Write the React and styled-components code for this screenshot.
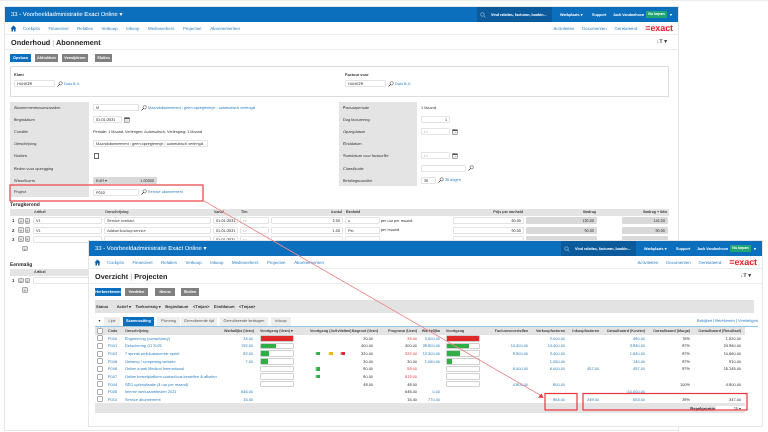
import React from "react";
import styled, { createGlobalStyle } from "styled-components";

const BLUE = "#0b6fbd";
const LINK = "#2b7fc0";
const RED = "#e8353c";

const GlobalStyle = createGlobalStyle`
  html, body { margin: 0; padding: 0; background: #fff; }
  body {
    font-family: "Liberation Sans", Arial, sans-serif;
    color: #333;
    overflow: hidden;
    text-rendering: geometricPrecision;
  }
`;

//desktop and windows:
const Desktop = styled.div`
  position: relative;
  width: 768px;
  height: 432px;
  overflow: hidden;
  background: #fff;
  border-top: 1px solid #ececec;
  box-sizing: border-box;
  filter: blur(0.3px);
`;

const Win = styled.div`
  position: absolute;
  left: ${(p) => p.$x}px;
  top: ${(p) => p.$y}px;
  width: 673px;
  height: ${(p) => p.$h}px;
  display: flex;
  flex-direction: column;
  background: #fff;
  box-shadow: 0 0 0 1px #e6e6e6;
  overflow: hidden;
`;

const TopBar = styled.div`
  height: 15px;
  flex: none;
  display: flex;
  align-items: stretch;
  background: ${BLUE};
  color: #fff;
`;

const AdminName = styled.div`
  align-self: center;
  margin-left: 6px;
  font-size: 5.9px;
  white-space: nowrap;
  flex: 1;
`;

const SearchBox = styled.div`
  width: 75px;
  display: flex;
  align-items: center;
  gap: 5px;
  padding-left: 3px;
  box-sizing: border-box;
  background: #0a5a9c;
  font-size: 3.7px;
  font-weight: bold;
  white-space: nowrap;
`;

const TopRight = styled.div`
  width: 126px;
  display: flex;
  align-items: center;
  font-size: 3.7px;
  font-weight: bold;
  white-space: nowrap;
  padding-left: 8px;
  box-sizing: border-box;
`;

const TopLink = styled.span`
  flex: none;
  width: ${(p) => p.$w}px;
`;

const BuyButton = styled.span`
  width: 21px;
  height: 7px;
  line-height: 7px;
  text-align: center;
  background: #1fa673;
  margin-right: 3px;
  font-size: 3.6px;
`;

const NavBar = styled.div`
  height: 13px;
  flex: none;
  display: flex;
  align-items: center;
  padding-left: 5px;
  border-bottom: 1px solid #ececec;
  box-sizing: border-box;
  font-size: 4.4px;
  color: ${LINK};
  white-space: nowrap;
`;

const NavItems = styled.div`
  display: flex;
  gap: 8.6px;
  margin-left: 6px;
  flex: 1;
`;

const NavRight = styled.div`
  display: flex;
  align-items: center;
  gap: 8px;
  margin-right: 5px;
  font-size: 4.3px;
`;

const Logo = styled.span`
  font-size: 9px;
  font-weight: bold;
  color: #e3202a;
  letter-spacing: -0.1px;
`;

const TitleRow = styled.div`
  height: 15px;
  flex: none;
  display: flex;
  align-items: center;
  justify-content: space-between;
  padding: 0 11px 0 6px;
  border-bottom: 1px solid #ececec;
  box-sizing: border-box;
`;

const Title = styled.h1`
  margin: 0;
  font-size: 7.3px;
  font-weight: bold;
  color: #222;
  white-space: nowrap;
`;

const TitleSep = styled.span`
  font-weight: normal;
  color: #aaa;
`;

const TextSize = styled.span`
  font-size: 5.6px;
  font-weight: bold;
  color: #444;
`;

const Toolbar = styled.div`
  display: flex;
  flex: none;
  margin: 4px 0 0 ${(p) => p.$left}px;
`;

const Btn = styled.span`
  flex: none;
  width: ${(p) => p.$w}px;
  height: 8px;
  line-height: 8px;
  margin-right: ${(p) => p.$gap}px;
  text-align: center;
  font-size: 3.8px;
  font-weight: bold;
  color: #fff;
  background: ${(p) => (p.$primary ? BLUE : "#808080")};
`;

//form parts:
const Content = styled.div`
  padding: 0 9px 0 5px;
  display: flex;
  flex-direction: column;
`;

const KlantBox = styled.div`
  height: 31px;
  margin-top: 4px;
  border: 1px solid #dcdcdc;
  box-sizing: border-box;
  display: grid;
  grid-template-columns: 331px 1fr;
  padding: 5px 3px;
`;

const SmallLabel = styled.div`
  font-size: 3.9px;
  font-weight: bold;
  color: #333;
  margin-bottom: 3px;
`;

const Field = styled.div`
  display: flex;
  align-items: center;
  min-width: 0;
`;

const Input = styled.div`
  flex: none;
  width: ${(p) => p.$w}px;
  height: 7px;
  line-height: 6px;
  padding: 0 2px;
  box-sizing: border-box;
  font-size: 3.8px;
  color: #333;
  text-align: ${(p) => (p.$right ? "right" : "left")};
  background: ${(p) => (p.$gray ? "#d9d9d9" : "#fff")};
  border: 1px solid ${(p) => (p.$gray ? "#d9d9d9" : "#e3e3e3")};
  border-radius: 1px;
  white-space: nowrap;
  overflow: hidden;
`;

const LinkText = styled.span`
  color: ${LINK};
  font-size: 3.8px;
  white-space: nowrap;
`;

const PlainText = styled.span`
  font-size: 3.8px;
  color: #333;
  white-space: nowrap;
`;

const IconBox = styled.svg`
  flex: none;
  width: ${(p) => p.$s || 6}px;
  height: ${(p) => p.$s || 6}px;
  margin: 0 1px 0 2px;
`;

const FormGrid = styled.div`
  display: grid;
  grid-template-columns: 329px 1fr;
  margin-top: 4.5px;
`;

const FormColumn = styled.div`
  display: grid;
  grid-template-columns: ${(p) => p.$label}px 1fr;
  grid-auto-rows: 12.1px;
`;

const FormLabel = styled.div`
  display: flex;
  align-items: center;
  padding-left: 4px;
  margin-bottom: ${(p) => (p.$split ? 1 : 0)}px;
  background: #e4e4e4;
  font-size: 3.9px;
  color: #333;
  white-space: nowrap;
`;

const FormValue = styled.div`
  display: flex;
  align-items: center;
  padding-left: 4px;
`;

const Tick = styled.span`
  width: 3px;
  height: 4px;
  margin-left: 1px;
  border: 1px solid #666;
`;

const SectionHead = styled.h2`
  margin: ${(p) => p.$top}px 0 0;
  height: 7px;
  line-height: 7px;
  font-size: 5px;
  font-weight: bold;
  color: #222;
`;

//recurring lines, columns run from the left edge of the form:
const LINE_COLS = "8px 14px 71px 109px 27px 31px 74px 37px 71px 73px 73px 23px 48px";

const LineHead = styled.div`
  display: grid;
  grid-template-columns: ${LINE_COLS};
  height: 7px;
  margin-top: 0.5px;
  line-height: 7px;
  background: #e4e4e4;
  font-size: 3.7px;
  font-weight: bold;
  color: #444;
`;

const LineRow = styled.div`
  display: grid;
  grid-template-columns: ${LINE_COLS};
  height: 9.2px;
  align-items: center;
  font-size: 3.8px;
  color: #333;
`;

const HeadCell = styled.span`
  grid-column: ${(p) => p.$col};
  padding: 0 2px;
  text-align: ${(p) => (p.$right ? "right" : "left")};
  white-space: nowrap;
`;

const Index = styled.span`
  font-size: 4.4px;
  font-weight: bold;
  padding-left: 2px;
`;

const RowButtons = styled.span`
  display: flex;
  gap: 1px;
  justify-content: ${(p) => (p.$single ? "center" : "flex-start")};
`;

const RowButton = styled.span`
  width: 5.5px;
  height: 5.5px;
  line-height: 5px;
  text-align: center;
  font-size: 4px;
  color: #555;
  background: #e2e2e2;
  border: 0.5px solid #aaa;
  border-radius: 1px;
  box-sizing: border-box;
`;

const LineInput = styled(Input)`
  width: auto;
  margin: 0 1px;
  ${(p) => p.$col && `grid-column: ${p.$col};`}
`;

//project overview:
const FilterBar = styled.div`
  height: 13px;
  margin: 4px 8px 0 6px;
  flex: none;
  display: flex;
  align-items: center;
  gap: 4.5px;
  padding-left: 1px;
  background: #e3e3e3;
  font-size: 4px;
  font-weight: bold;
  color: #333;
  white-space: nowrap;
`;

const FilterName = styled.span`
  margin-right: 4px;
`;

const TabRow = styled.div`
  height: 9px;
  margin: 4px 4px 0 6px;
  flex: none;
  display: flex;
  align-items: stretch;
  border-bottom: 1px solid #8fc6e6;
`;

const TabArrow = styled.span`
  width: 9px;
  text-align: center;
  font-size: 4px;
  line-height: 8px;
  color: #333;
`;

const Tab = styled.span`
  width: ${(p) => p.$w}px;
  margin-right: ${(p) => p.$gap}px;
  line-height: 8px;
  text-align: center;
  font-size: 3.8px;
  font-weight: ${(p) => (p.$active ? "bold" : "normal")};
  color: ${(p) => (p.$active ? "#fff" : "#555")};
  background: ${(p) => (p.$active ? BLUE : "#eeeeee")};
  white-space: nowrap;
`;

const TabLinks = styled.span`
  margin-left: auto;
  font-size: 4px;
  line-height: 8px;
  color: ${LINK};
  white-space: nowrap;
`;

const PROJ_COLS = "12px 17px 100px 29px 47px 52px 21px 44px 23px 42px 46px 37px 34px 46px 45px 51px 4px";

const ProjTable = styled.div`
  margin: 0 0 0 6px;
  width: 650px;
  flex: none;
`;

const ProjHead = styled.div`
  display: grid;
  grid-template-columns: ${PROJ_COLS};
  height: 7.5px;
  align-items: center;
  background: #e4e4e4;
  font-size: 3.7px;
  font-weight: bold;
  color: #444;
  white-space: nowrap;
`;

const ProjRow = styled.div`
  display: grid;
  grid-template-columns: ${PROJ_COLS};
  height: 7.65px;
  align-items: center;
  font-size: 3.9px;
  color: #333;
  white-space: nowrap;
`;

const Cell = styled.span`
  text-align: ${(p) => (p.$right ? "right" : "left")};
  padding-left: ${(p) => (p.$right ? 0 : p.$pad || 1)}px;
  color: ${(p) => (p.$red ? RED : p.$link ? LINK : "inherit")};
  min-width: 0;
`;

const CheckCell = styled.span`
  display: flex;
  padding-left: 2px;
`;

const CheckBox = styled.span`
  width: 4px;
  height: 4px;
  border: 0.5px solid #aaa;
  border-radius: 1px;
  background: #fff;
`;

const BarCell = styled.span`
  padding-left: ${(p) => p.$pad}px;
  display: flex;
`;

const Bar = styled.span`
  display: block;
  width: 32px;
  height: 4.6px;
  background: #fff;
  border: 0.5px solid #d0d0d0;
  border-radius: 1px;
  overflow: hidden;
`;

const BarFill = styled.span`
  display: block;
  height: 100%;
  background: ${(p) => (p.$red ? "#e02a2a" : "#2fae45")};
`;

const ActCell = styled.span`
  display: grid;
  grid-template-columns: 12.5px 12px 12px;
  padding-left: 15px;
`;

const ActMark = styled.span`
  grid-column: ${(p) => p.$col};
  width: 5px;
  height: 3.6px;
  background: linear-gradient(to right, transparent 0, ${(p) => p.$c} 40%, ${(p) => p.$c} 100%);
`;

const ProjFooter = styled.div`
  height: 10px;
  display: flex;
  align-items: center;
  justify-content: flex-end;
  gap: 1px;
  background: #e4e4e4;
`;

const FooterLabel = styled.span`
  font-size: 4px;
  font-weight: bold;
  color: #222;
`;

const FooterSelect = styled.span`
  width: 29px;
  height: 5px;
  line-height: 5px;
  text-align: right;
  padding-right: 4px;
  box-sizing: border-box;
  background: #fff;
  font-size: 4px;
`;

const Overlay = styled.svg`
  position: absolute;
  left: 0;
  top: 0;
  width: 768px;
  height: 432px;
  pointer-events: none;
`;

const Lens = () => (
  <IconBox viewBox="0 0 12 12">
    <circle cx="7.5" cy="4.5" r="3.3" fill="none" stroke="#555" strokeWidth="1.2" />
    <path d="M5 7 1.5 10.5" stroke="#333" strokeWidth="1.8" strokeLinecap="round" />
  </IconBox>
);

const Calendar = () => (
  <IconBox viewBox="0 0 12 12">
    <rect x="1" y="1.5" width="10" height="9.5" fill="#fff" stroke="#555" strokeWidth="1" />
    <rect x="1" y="1.5" width="10" height="2.5" fill="#555" />
    <path d="M3 6h6M3 8.5h6" stroke="#777" strokeWidth="1" strokeDasharray="1.4 0.8" />
  </IconBox>
);

const HomeIcon = () => (
  <svg width="7" height="7" viewBox="0 0 12 12">
    <path d="M6 1 .8 6h1.7v5h2.6V7.6h1.8V11h2.6V6h1.7z" fill="#0b5da3" />
  </svg>
);

const GlassIcon = () => (
  <svg width="6" height="6" viewBox="0 0 12 12">
    <circle cx="5" cy="5" r="3.6" fill="none" stroke="#cfe3f3" strokeWidth="1" />
    <path d="M7.8 7.8 11 11" stroke="#cfe3f3" strokeWidth="1" />
  </svg>
);

const NAV = ["Cockpits", "Financieel", "Relaties", "Verkoop", "Inkoop", "Medewerkers", "Projecten", "Abonnementen"];

const AppWindow = ({ x, y, h, head, sub, children }) => (
  <Win $x={x} $y={y} $h={h}>
    <TopBar>
      <AdminName>33 - Voorbeeldadministratie Exact Online ▾</AdminName>
      <SearchBox>
        <GlassIcon />
        Vind relaties, facturen, boekin...
      </SearchBox>
      <TopRight>
        <TopLink $w={32}>Werkplaats ▾</TopLink>
        <TopLink $w={21}>Support</TopLink>
        <TopLink $w={33}>Jack Vandenhove</TopLink>
        <BuyButton>Nu kopen</BuyButton>
        ▾
      </TopRight>
    </TopBar>
    <NavBar>
      <HomeIcon />
      <NavItems>
        {NAV.map((n) => (
          <span key={n}>{n}</span>
        ))}
      </NavItems>
      <NavRight>
        <span>Activiteiten</span>
        <span>Documenten</span>
        <span>Gerelateerd</span>
        <Logo>=exact</Logo>
      </NavRight>
    </NavBar>
    <TitleRow>
      <Title>
        {head} <TitleSep>|</TitleSep> {sub}
      </Title>
      <TextSize>↓T ▾</TextSize>
    </TitleRow>
    {children}
  </Win>
);

const BackButtons = () => (
  <Toolbar $left={5}>
    <Btn $primary $w={21} $gap={4}>Opslaan</Btn>
    <Btn $w={23} $gap={4}>Afdrukken</Btn>
    <Btn $w={26} $gap={7}>Verwijderen</Btn>
    <Btn $w={17} $gap={0}>Sluiten</Btn>
  </Toolbar>
);

const LEFT_FORM = [
  { label: "Abonnementsvoorwaarden", value: <><Input $w={46}>M</Input><Lens /><LinkText>Maandabonnement - geen opzegtermijn - automatisch verlengd</LinkText></> },
  { label: "Begindatum", value: <><Input $w={29}>01-01-2021</Input><Calendar /></> },
  { label: "Conditie", value: <PlainText>Periode: 1 Maand, Verlengen: Automatisch, Verlenging: 1 Maand</PlainText> },
  { label: "Omschrijving", value: <Input $w={115}>Maandabonnement - geen opzegtermijn - automatisch verlengd</Input> },
  { label: "Notities", value: <Tick /> },
  { label: "Reden voor opzegging" },
  { label: "Wisselkoers", value: <><Input $w={15} $gray>EUR ▾</Input><Input $w={49} $gray $right>1.00000</Input></> },
  { label: "Project", value: <><Input $w={46}>P010</Input><Lens /><LinkText>Service abonnement</LinkText></>, split: true },
];

const RIGHT_FORM = [
  { label: "Factuurperiode", value: <PlainText>1 Maand</PlainText> },
  { label: "Dag facturering", value: <Input $w={29} $right>1</Input> },
  { label: "Opzegdatum", value: <><Input $w={29}>- -</Input><Calendar /></> },
  { label: "Einddatum" },
  { label: "Startdatum voor factuurfile", value: <><Input $w={29}>- -</Input><Calendar /></> },
  { label: "Classificatie", value: <><Input $w={45} /><Lens /></> },
  { label: "Betalingsconditie", value: <><Input $w={15}>30</Input><Lens /><LinkText>30 dagen</LinkText></> },
];

const LINES = [
  { art: "V1", oms: "Service contract", from: "01-01-2021", qty: "2.00", unit: "u", per: "per uur per maand", price: "60.00", amt: "120.00", btw: "145.20" },
  { art: "V1", oms: "Add-on backup service", from: "01-01-2021", qty: "1.00", unit: "Pst", per: "per maand", price: "90.00", amt: "90.00", btw: "90.00" },
  { art: "", oms: "", from: "01-01-2021", qty: "", unit: "", per: "", price: "", amt: "", btw: "" },
];

const Recurring = () => (
  <>
    <SectionHead $top={3.5}>Terugkerend</SectionHead>
    <LineHead>
      <HeadCell $col={3}>Artikel</HeadCell>
      <HeadCell $col={4}>Omschrijving</HeadCell>
      <HeadCell $col={5}>Vanaf</HeadCell>
      <HeadCell $col={6}>T/m</HeadCell>
      <HeadCell $col={7} $right>Aantal</HeadCell>
      <HeadCell $col={8}>Eenheid</HeadCell>
      <HeadCell $col={10} $right>Prijs per eenheid</HeadCell>
      <HeadCell $col={11} $right>Bedrag</HeadCell>
      <HeadCell $col="12 / 14" $right>Bedrag + Btw</HeadCell>
    </LineHead>
    {LINES.map((l, i) => (
      <LineRow key={i}>
        <Index>{i + 1}</Index>
        <RowButtons><RowButton>×</RowButton><RowButton>×</RowButton></RowButtons>
        <LineInput>{l.art}</LineInput>
        <LineInput>{l.oms}</LineInput>
        <LineInput>{l.from}</LineInput>
        <LineInput>- -</LineInput>
        <LineInput $right>{l.qty}</LineInput>
        <LineInput>{l.unit}</LineInput>
        <PlainText>{l.per}</PlainText>
        <LineInput $right>{l.price}</LineInput>
        <LineInput $gray $right>{l.amt}</LineInput>
        <LineInput $gray $right $col={13}>{l.btw}</LineInput>
      </LineRow>
    ))}
    <LineRow>
      <span />
      <RowButtons $single><RowButton>+</RowButton></RowButtons>
    </LineRow>
  </>
);

const OneOff = () => (
  <>
    <SectionHead $top={8.5}>Eenmalig</SectionHead>
    <LineHead>
      <HeadCell $col={3}>Artikel</HeadCell>
    </LineHead>
    <LineRow>
      <Index>1</Index>
      <RowButtons><RowButton>×</RowButton><RowButton>×</RowButton></RowButtons>
      <LineInput />
      <LineInput />
    </LineRow>
    <LineRow>
      <span />
      <RowButtons $single><RowButton>+</RowButton></RowButtons>
    </LineRow>
  </>
);

const green = "#2fae45";

const PROJECTS = [
  { code: "P000", oms: "Engineering (consultancy)", wu: "24.00", bar: 100, red: true, beg: "20.00", prog: "24.00", progRed: true, wb: "3.600.00", bar2: 100, red2: true, verk: "2.000.00", kost: "480.00", marge: "76%", res: "1.520.00" },
  { code: "P001", oms: "Detachering Q1 2021", wu: "192.00", bar: 48, beg: "400.00", prog: "400.00", wb: "28.800.00", bar2: 70, fact: "14.400.00", verk: "14.400.00", kost: "3.840.00", marge: "87%", res: "24.960.00" },
  { code: "P002", oms: "7 sprints web-basisversie sprint", wu: "82.00", bar: 26, acts: [green, "#f2b316", "#e02a2a"], beg: "320.00", prog: "322.00", progRed: true, wb: "12.300.00", bar2: 40, fact: "9.900.00", verk: "2.400.00", kost: "1.640.00", marge: "87%", res: "10.660.00" },
  { code: "P006", oms: "Ontwerp / rompening website", wu: "7.00", bar: 23, beg: "30.00", prog: "30.00", wb: "1.050.00", bar2: 15, verk: "1.050.00", kost: "140.00", marge: "87%", res: "910.00" },
  { code: "P006", oms: "Online a-anti Medical International", bar: 0, acts: [green], beg: "80.00", prog: "59.00", progRed: true, bar2: 0, fact: "6.000.00", verk: "6.000.00", ink: "457.00", kost: "457.00", marge: "87%", res: "15.145.00" },
  { code: "P007", oms: "Online bestelplatform contactloos bestellen & afhalen", bar: 0, acts: [green], beg: "80.00", prog: "519.00", progRed: true, bar2: 0 },
  { code: "P004", oms: "SEO optimalisatie (4 uur per maand)", bar: 0, beg: "48.00", prog: "48.00", bar2: 0, fact: "4.800.00", verk: "800.00", marge: "100%", res: "4.800.00" },
  { code: "P005", oms: "Interne werkzaamheden 2021", wu: "646.00", prog: "646.00", wb: "0.00", kost: "-10.000.00" },
  { code: "P010", oms: "Service abonnement", wu: "15.40", prog: "15.40", wb: "770.00", verk: "864.00", ink: "249.00", kost: "553.00", marge: "39%", res: "347.00" },
];

const ProgressBar = ({ pad, value, red }) => (
  <BarCell $pad={pad}>
    {value !== undefined && (
      <Bar>
        <BarFill $red={red} style={{ width: `${value}%` }} />
      </Bar>
    )}
  </BarCell>
);

const ProjectTable = () => (
  <ProjTable>
    <ProjHead>
      <CheckCell><CheckBox /></CheckCell>
      <Cell>Code</Cell>
      <Cell>Omschrijving</Cell>
      <Cell $right>Werkelijke (Uren)</Cell>
      <Cell $pad={7}>Voortgang (Uren) ▾</Cell>
      <Cell $pad={10}>Voortgang (Activiteiten)</Cell>
      <Cell $right>Begroot (Uren)</Cell>
      <Cell $right>Prognose (Uren)</Cell>
      <Cell $right>Werkelijke</Cell>
      <Cell $pad={6}>Voortgang</Cell>
      <Cell $right>Factuurvoorstellen</Cell>
      <Cell $right>Verkoopfacturen</Cell>
      <Cell $right>Inkoopfacturen</Cell>
      <Cell $right>Gerealiseerd (Kosten)</Cell>
      <Cell $right>Gerealiseerd (Marge)</Cell>
      <Cell $right>Gerealiseerd (Resultaat)</Cell>
    </ProjHead>
    {PROJECTS.map((p, i) => (
      <ProjRow key={i}>
        <CheckCell><CheckBox /></CheckCell>
        <Cell $link>{p.code}</Cell>
        <Cell $link>{p.oms}</Cell>
        <Cell $right $link>{p.wu}</Cell>
        <ProgressBar pad={7} value={p.bar} red={p.red} />
        <ActCell>
          {(p.acts || []).map((c, j) => (
            <ActMark key={c} $col={j + 1} $c={c} />
          ))}
        </ActCell>
        <Cell $right>{p.beg}</Cell>
        <Cell $right $red={p.progRed}>{p.prog}</Cell>
        <Cell $right $link>{p.wb}</Cell>
        <ProgressBar pad={6} value={p.bar2} red={p.red2} />
        <Cell $right $link>{p.fact}</Cell>
        <Cell $right $link>{p.verk}</Cell>
        <Cell $right $link>{p.ink}</Cell>
        <Cell $right $link>{p.kost}</Cell>
        <Cell $right>{p.marge}</Cell>
        <Cell $right>{p.res}</Cell>
      </ProjRow>
    ))}
    <ProjFooter>
      <FooterLabel>Regelgrootte</FooterLabel>
      <FooterSelect>25 ▾</FooterSelect>
    </ProjFooter>
  </ProjTable>
);

const App = () => (
  <Desktop>
    <GlobalStyle />
    <AppWindow x={5} y={6} h={423} head="Onderhoud" sub="Abonnement">
      <BackButtons />
      <Content>
        <KlantBox>
          <div>
            <SmallLabel>Klant</SmallLabel>
            <Field><Input $w={41}>HANK28</Input><Lens /><LinkText>Data B.V.</LinkText></Field>
          </div>
          <div>
            <SmallLabel>Factuur voor</SmallLabel>
            <Field><Input $w={41}>HANK28</Input><Lens /><LinkText>Data B.V.</LinkText></Field>
          </div>
        </KlantBox>
        <FormGrid>
          <FormColumn $label={79}>
            {LEFT_FORM.map((r) => (
              <React.Fragment key={r.label}>
                <FormLabel $split={r.split}>{r.label}</FormLabel>
                <FormValue>{r.value}</FormValue>
              </React.Fragment>
            ))}
          </FormColumn>
          <FormColumn $label={78}>
            {RIGHT_FORM.map((r) => (
              <React.Fragment key={r.label}>
                <FormLabel>{r.label}</FormLabel>
                <FormValue>{r.value}</FormValue>
              </React.Fragment>
            ))}
          </FormColumn>
        </FormGrid>
        <Recurring />
        <OneOff />
      </Content>
    </AppWindow>

    <AppWindow x={89} y={240} h={185} head="Overzicht" sub="Projecten">
      <Toolbar $left={6}>
        <Btn $primary $w={26} $gap={4}>Herberekenen</Btn>
        <Btn $w={23} $gap={7}>Verdelen</Btn>
        <Btn $w={20} $gap={6}>Nieuw</Btn>
        <Btn $w={18} $gap={0}>Sluiten</Btn>
      </Toolbar>
      <FilterBar>
        <FilterName>Status</FilterName>
        <span>Actief ▾</span>
        <span>Toekomstig ▾</span>
        <span>Begindatum</span>
        <span>&lt;Tmjan&gt;</span>
        <span>Einddatum</span>
        <span>&lt;Tmjan&gt;</span>
      </FilterBar>
      <TabRow>
        <TabArrow>▾</TabArrow>
        <Tab $w={16} $gap={3}>Lijst</Tab>
        <Tab $w={31} $gap={3} $active>Samenvatting</Tab>
        <Tab $w={23} $gap={1}>Planning</Tab>
        <Tab $w={36} $gap={3}>Gerealiseerde tijd</Tab>
        <Tab $w={48} $gap={3}>Gerealiseerde bedragen</Tab>
        <Tab $w={20} $gap={0}>Inkoop</Tab>
        <TabLinks>Bekijken | Berekenen | Vernietigen</TabLinks>
      </TabRow>
      <ProjectTable />
    </AppWindow>

    <Overlay viewBox="0 0 768 432">
      <g fill="none">
        <rect x="10" y="184" width="193" height="16" stroke="#ea5a5e" strokeWidth="1.4" />
        <line x1="204" y1="200" x2="540" y2="394" stroke="#ee8a8c" strokeWidth="1" />
        <rect x="545" y="392.5" width="32" height="16.5" stroke={RED} strokeWidth="1.2" />
        <rect x="583" y="392.5" width="164" height="16.5" stroke={RED} strokeWidth="1.2" />
      </g>
      <path d="M541.5 392.5 543.5 397 538 396.5z" fill={RED} />
    </Overlay>
  </Desktop>
);

export default App;
